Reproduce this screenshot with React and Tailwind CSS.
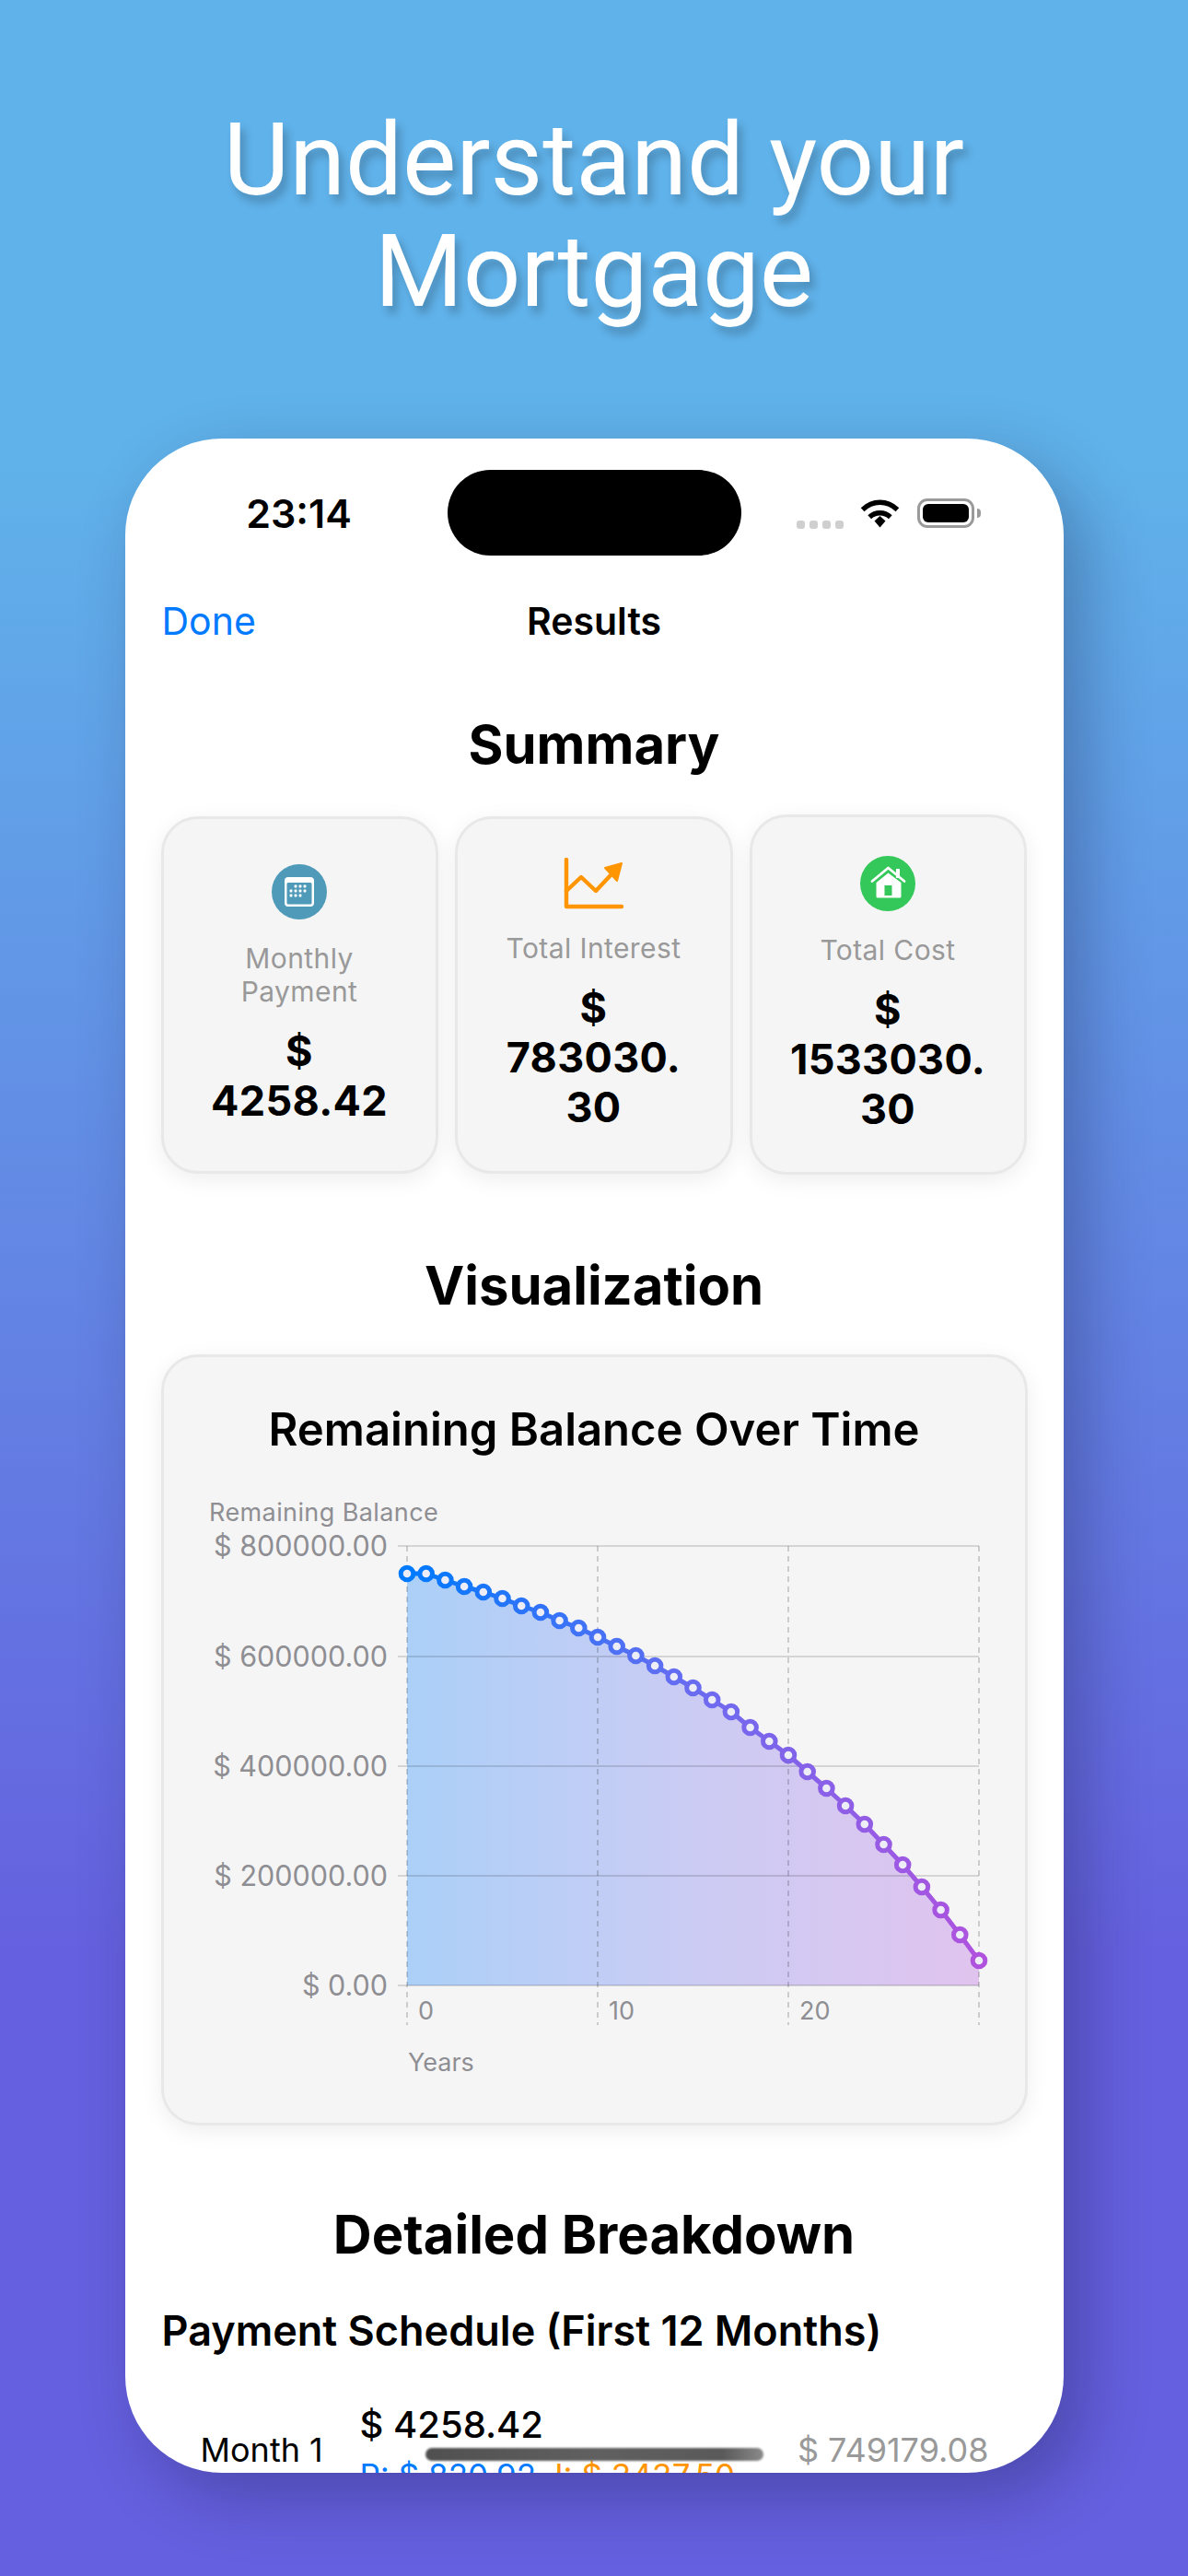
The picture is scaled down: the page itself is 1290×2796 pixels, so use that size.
import React from "react";

const ys = [1708,1708,1715,1722,1728,1735,1743,1750,1759,1767,1777,1787,1797,1808,1820,1832,1845,1858,1875,1890,1905,1923,1941,1960,1980,2002,2024,2048,2073,2100,2128];
const xs = ys.map((_, i) => 442 + i * 20.7);
const linePts = ys.map((y, i) => `${xs[i]},${y}`).join(" ");
const areaPts = `442,2155 ${linePts} 1063,2155`;
const yTicks = [["$ 800000.00",1678],["$ 600000.00",1798],["$ 400000.00",1917],["$ 200000.00",2036],["$ 0.00",2155]];
const xTicks = [[442,"0"],[649,"10"],[856,"20"],[1063,""]];

function mix(i) {
  const t = i / 30;
  const a = [0, 122, 255], b = [106, 108, 240], c = [175, 82, 222];
  const [p, q, u] = t < 0.5 ? [a, b, t * 2] : [b, c, (t - 0.5) * 2];
  return `rgb(${p.map((v, k) => Math.round(v + (q[k] - v) * u)).join(",")})`;
}

function CalendarIcon() {
  const dots = [[26,24],[31,24],[36,24],[21,29],[26,29],[31,29],[36,29],[21,34],[26,34],[31,34]];
  return (
    <svg width="60" height="60" viewBox="0 0 60 60" className="shrink-0">
      <circle cx="30" cy="30" r="30" fill="#4f9ab8" />
      <rect x="14" y="14" width="32" height="32" rx="4" fill="#fff" />
      <rect x="16.5" y="20" width="27" height="23.5" rx="1.5" fill="#4f9ab8" />
      {dots.map(([x, y], i) => <rect key={i} x={x - 1.4} y={y - 1.4} width="2.8" height="2.8" rx="0.6" fill="#fff" />)}
    </svg>
  );
}

function TrendIcon() {
  return (
    <svg width="66" height="56" viewBox="0 0 66 56" className="shrink-0" fill="none" stroke="#ff9500" strokeWidth="4.4" strokeLinecap="round" strokeLinejoin="round">
      <path d="M3 2V53H63" />
      <path d="M3 36L19 21L35 36L51 19" />
      <path d="M45 11L63 6L58 25Z" fill="#ff9500" strokeWidth="2" />
    </svg>
  );
}

function HouseIcon() {
  return (
    <svg width="60" height="60" viewBox="0 0 60 60" className="shrink-0">
      <circle cx="30" cy="30" r="30" fill="#34c759" />
      <rect x="39" y="14" width="4" height="10" fill="#fff" />
      <path d="M13 27.5L30.5 13L48 27.5" fill="none" stroke="#fff" strokeWidth="2.8" strokeLinecap="round" strokeLinejoin="round" />
      <path d="M17.5 29L30.5 18.5L44.5 29V44a1.5 1.5 0 0 1-1.5 1.5H19a1.5 1.5 0 0 1-1.5-1.5Z" fill="#fff" />
      <rect x="26.5" y="32" width="8" height="11" fill="#34c759" />
    </svg>
  );
}

function Wifi() {
  return (
    <svg width="43" height="32" viewBox="0 0 43 32" fill="none" stroke="#000" strokeWidth="5.4">
      <path d="M2.6 12.2C13.5 1.6 29.5 1.6 40.4 12.2" />
      <path d="M10.2 20.2C16.5 14.2 26.5 14.2 32.8 20.2" />
      <path d="M15.5 24.5L21.5 19L27.5 24.5L21.5 31.5Z" fill="#000" stroke="none" />
    </svg>
  );
}

function StatCard({ icon, label, value, cls }) {
  return (
    <div className={`flex flex-col items-center justify-center rounded-[40px] border-[3px] border-[#e8e8e8] bg-[#f5f5f5] shadow-[0_6px_24px_rgba(0,0,0,0.07)] ${cls}`}>
      {icon}
      <div className="mt-6 text-center text-[30px] leading-[36px] tracking-[0.4px] text-[#999999]">{label}</div>
      <div className="mt-5 text-center text-[45px] font-bold leading-[54px] tracking-[0.3px] text-black">{value}</div>
    </div>
  );
}

function Chart() {
  return (
    <svg width="934" height="640" viewBox="178 1620 934 640" className="mt-[38px] block">
      <defs>
        <linearGradient id="lineG" gradientUnits="userSpaceOnUse" x1="442" y1="0" x2="1063" y2="0">
          <stop offset="0" stopColor="#007aff" />
          <stop offset="0.5" stopColor="#6a6cf0" />
          <stop offset="1" stopColor="#af52de" />
        </linearGradient>
      </defs>
      <polygon points={areaPts} fill="url(#lineG)" fillOpacity="0.3" />
      {yTicks.map(([t, y]) => <line key={t} x1="432" x2="1063" y1={y} y2={y} stroke="#000" strokeOpacity="0.13" strokeWidth="2" />)}
      {xTicks.map(([x]) => <line key={x} x1={x} x2={x} y1="1678" y2="2198" stroke="#000" strokeOpacity="0.22" strokeWidth="1.5" strokeDasharray="6 5" />)}
      <polyline points={linePts} fill="none" stroke="url(#lineG)" strokeWidth="5" strokeLinejoin="round" />
      {ys.map((y, i) => (
        <circle key={i} cx={xs[i]} cy={y} r="6.8" fill="#ededf8" stroke={mix(i)} strokeWidth="5" />
      ))}
      <g fontFamily="Inter, sans-serif" fill="#8e8e93">
        <text x="227" y="1651" fontSize="27" letterSpacing="0.4">Remaining Balance</text>
        {yTicks.map(([t, y]) => <text key={t} x="421" y={y + 11} fontSize="30.5" textAnchor="end">{t}</text>)}
        {xTicks.map(([x, t]) => t && <text key={t} x={x + 12} y="2192" fontSize="27">{t}</text>)}
        <text x="443" y="2248" fontSize="27">Years</text>
      </g>
    </svg>
  );
}

export default function App() {
  return (
    <div className="flex h-[2796px] w-[1290px] flex-col items-center overflow-hidden bg-[linear-gradient(180deg,#60b2ea_18%,#6560df_76%)]">
      <h1 className="mt-[113px] w-full text-center text-[110px] font-normal leading-[121px] text-white [font-family:Roboto,sans-serif] [text-shadow:5px_8px_10px_rgba(0,0,0,0.22)]">
        Understand your<br />Mortgage
      </h1>
      <div className="relative mt-[121px] h-[2208px] w-[1019px] shrink-0 overflow-hidden rounded-[105px] bg-white px-10 text-black shadow-[22px_26px_70px_rgba(20,20,60,0.3)] [font-family:Inter,sans-serif]">
        <div className="-mx-10 flex items-start pt-[34px]">
          <div className="flex h-[93px] w-[350px] items-center justify-center pl-[28px] pt-[2px] text-[43px] font-semibold leading-none">23:14</div>
          <div className="h-[93px] w-[319px] rounded-full bg-black" />
          <div className="flex h-[93px] items-center pl-[60px]">
            <div className="mt-[25px] flex gap-[5px]">
              <span className="h-[9px] w-[9px] rounded-[3px] bg-[#cfcfcf]" />
              <span className="h-[9px] w-[9px] rounded-[3px] bg-[#cfcfcf]" />
              <span className="h-[9px] w-[9px] rounded-[3px] bg-[#cfcfcf]" />
              <span className="h-[9px] w-[9px] rounded-[3px] bg-[#cfcfcf]" />
            </div>
            <div className="ml-[18px] flex"><Wifi /></div>
            <div className="ml-[19px] flex h-8 w-[62px] items-center justify-center rounded-[11px] border-[3px] border-[#9a9a9a]">
              <div className="h-5 w-[50px] rounded-[6px] bg-black" />
            </div>
            <div className="ml-[3px] h-[10px] w-[4px] rounded-r-full bg-[#9a9a9a]" />
          </div>
        </div>

        <div className="relative mt-9 flex h-[72px] items-center justify-center">
          <span className="text-[41px] font-semibold">Results</span>
          <span className="absolute left-0 text-[41px] text-[#007aff]">Done</span>
        </div>

        <h2 className="mt-[62px] text-center text-[58px] font-bold leading-[70px]">Summary</h2>
        <div className="-mx-px mt-[41px] flex items-center gap-[18px]">
          <StatCard cls="h-[388px] w-[301px]" icon={<CalendarIcon />} label={<>Monthly<br />Payment</>} value={<>$<br />4258.42</>} />
          <StatCard cls="h-[388px] w-[302px]" icon={<TrendIcon />} label="Total Interest" value={<>$<br />783030.<br />30</>} />
          <StatCard cls="h-[391px] w-[301px]" icon={<HouseIcon />} label="Total Cost" value={<>$<br />1533030.<br />30</>} />
        </div>

        <h2 className="mt-[85px] text-center text-[58px] font-bold leading-[70px]">Visualization</h2>
        <div className="-mx-px mt-10 h-[837px] rounded-[40px] border-[3px] border-[#e8e8e8] bg-[#f5f5f5] pt-[49px] shadow-[0_6px_24px_rgba(0,0,0,0.07)]">
          <div className="text-center text-[49px] font-semibold leading-[60px]">Remaining Balance Over Time</div>
          <Chart />
        </div>

        <h2 className="mt-[83px] text-center text-[58px] font-bold leading-[70px]">Detailed Breakdown</h2>
        <div className="mt-[45px] text-[45px] font-semibold leading-[50px]">Payment Schedule (First 12 Months)</div>
        <div className="mt-[54px] flex items-center pl-[42px] pr-[41px]">
          <div className="w-[173px] shrink-0 text-[36px] leading-[44px]">Month 1</div>
          <div className="shrink-0">
            <div className="text-[40px] font-medium leading-[46px]">$ 4258.42</div>
            <div className="mt-[10px] flex gap-5 text-[35px] leading-[44px]">
              <span className="text-[#007aff]">P: $ 820.92</span>
              <span className="text-[#ff9500]">I: $ 3437.50</span>
            </div>
          </div>
          <div className="ml-auto text-[36px] leading-[44px] text-[#999999]">$ 749179.08</div>
        </div>

        <div className="absolute bottom-[13px] left-[326px] h-[14px] w-[367px] rounded-full bg-[linear-gradient(90deg,#505050,#606060_50%,#5a5a5a_88%,#8a8a8a)] blur-[1px]" />
      </div>
    </div>
  );
}
